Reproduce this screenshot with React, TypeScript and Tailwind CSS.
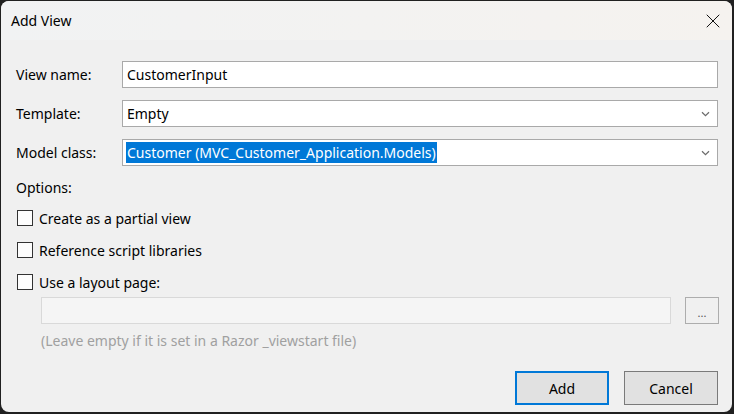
import { X } from 'lucide-react';

const font = { fontFamily: '"Noto Sans", "Open Sans", Arial, sans-serif' };

function Chevron() {
  return (
    <svg width="9" height="6" viewBox="0 0 9 6" className="shrink-0">
      <path d="M1 1.2 L4.5 4.6 L8 1.2" fill="none" stroke="#6b6b6b" strokeWidth="1.2" />
    </svg>
  );
}

function Row({ label, children }: { label: string; children: React.ReactNode }) {
  return (
    <div className="flex items-center h-[27px]">
      <div className="w-[106px] shrink-0 text-[14px] text-black">{label}</div>
      <div className="flex-1 h-full">{children}</div>
    </div>
  );
}

function Check({ label }: { label: string }) {
  return (
    <div className="flex items-center h-[20px]">
      <div className="w-[16px] h-[16px] border border-[#333333] bg-[#fdfdfd] ml-[1px]" />
      <span className="ml-[6px] text-[14px] text-black">{label}</span>
    </div>
  );
}

export default function App() {
  return (
    <div className="w-[734px] h-[414px] bg-[#202020] pl-[1px] pt-[1px] pr-[2px] pb-[2px]" style={font}>
      <div className="w-full h-full rounded-[8px] overflow-hidden bg-[#f0f0f0] flex flex-col">
        <div className="h-[39px] shrink-0 bg-gradient-to-r from-[#f1f2f3] to-[#f5f2ef] flex items-center justify-between pl-[10px] pr-[7px]">
          <span className="text-[14px] text-black">Add View</span>
          <X size={24} strokeWidth={1} color="#111" />
        </div>
        <div className="flex-1 flex flex-col pl-[15px] pr-[14px] pt-[21px]">
          <div className="flex flex-col gap-[12px]">
            <Row label="View name:">
              <div className="h-full bg-white border border-[#a9a9a9] flex items-center px-[4px] text-[14px] text-black">
                CustomerInput
              </div>
            </Row>
            <Row label="Template:">
              <div className="h-full bg-white border border-[#a9a9a9] flex items-center justify-between pl-[4px] pr-[7px] text-[14px] text-black">
                <span>Empty</span>
                <Chevron />
              </div>
            </Row>
            <Row label="Model class:">
              <div className="h-full bg-white border border-[#a9a9a9] flex items-center justify-between pl-[3px] pr-[7px] text-[14px]">
                <span className="bg-[#0078d7] text-white leading-[21px] px-[1px]">
                  Customer (MVC_Customer_Application.Models)
                </span>
                <Chevron />
              </div>
            </Row>
          </div>
          <div className="mt-[12px] leading-[20px] text-[14px] text-black">Options:</div>
          <div className="mt-[10px] flex flex-col gap-[12px]">
            <Check label="Create as a partial view" />
            <Check label="Reference script libraries" />
            <Check label="Use a layout page:" />
          </div>
          <div className="mt-[5px] ml-[25px] flex items-center gap-[14px] h-[27px]">
            <div className="flex-1 h-full bg-[#f5f5f5] border border-[#d9d9d9]" />
            <div className="w-[34px] h-full border border-[#adadad] bg-[#f0f0f0] flex items-center justify-center text-[11px] text-[#555] leading-none pt-[4px] mr-[-1px]">
              ...
            </div>
          </div>
          <div className="mt-[7px] ml-[25px] leading-[20px] text-[14px] text-[#a0a0a0]">
            (Leave empty if it is set in a Razor _viewstart file)
          </div>
          <div className="mt-[20px] flex justify-end gap-[15px]">
            <button className="w-[94px] h-[34px] bg-[#e1e1e1] border-2 border-[#0078d7] text-[14px] text-black">
              Add
            </button>
            <button className="w-[94px] h-[34px] bg-[#e1e1e1] border border-[#7a7a7a] text-[14px] text-black">
              Cancel
            </button>
          </div>
        </div>
      </div>
    </div>
  );
}
